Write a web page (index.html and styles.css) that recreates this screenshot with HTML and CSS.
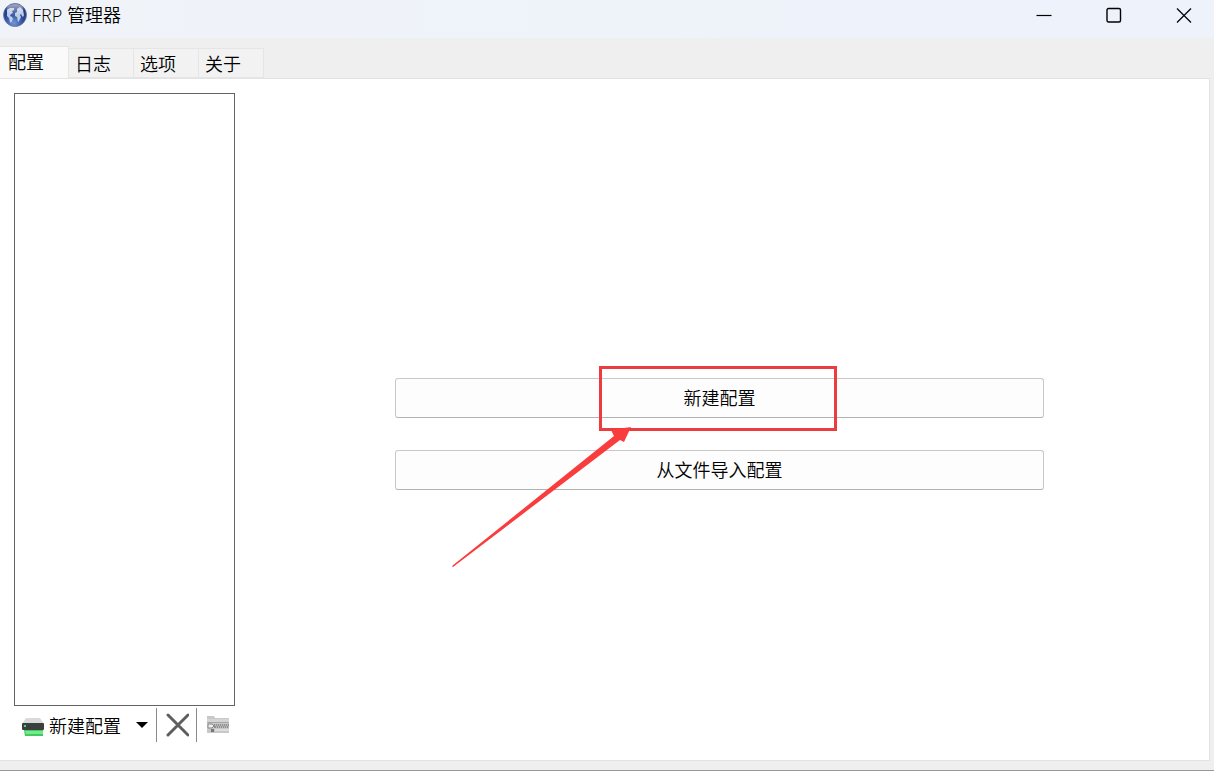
FILE: index.html
```html
<!DOCTYPE html>
<html lang="zh-CN">
<head>
<meta charset="utf-8">
<title>FRP 管理器</title>
<link rel="stylesheet" href="styles.css">
</head>
<body>
<div class="window">
  <header class="titlebar">
    <svg class="app-icon" viewBox="0 0 24 24" aria-hidden="true">
      <defs>
        <radialGradient id="globe" cx=".45" cy=".85" r=".85"><stop offset="0" stop-color="#6f98d6"/><stop offset=".5" stop-color="#2c4a98"/><stop offset="1" stop-color="#1c2c6c"/></radialGradient>
        <linearGradient id="shine" x1="0" y1="0" x2="0" y2="1"><stop offset="0" stop-color="#fff" stop-opacity=".6"/><stop offset="1" stop-color="#fff" stop-opacity=".05"/></linearGradient>
      </defs>
      <circle cx="12" cy="12" r="11.5" fill="url(#globe)" stroke="#6878a8" stroke-width=".8"/>
      <path d="M4 7l3-2 4 0 0 2-2 1 1 2-2 1-1 2 2 1 1 2-2 4-1-1-1-4-2-2zM14 6l3-2 3 3 1 5-1 2-1-1-1-2-1 1 1 2-2 4-1 1-1-5-2-1 0-3 2-1z" fill="#d0e0f4" opacity=".85"/>
      <ellipse cx="12" cy="6.500" rx="8.500" ry="5.500" fill="url(#shine)"/>
    </svg>
    <h1 class="title">FRP 管理器</h1>
    <div class="window-controls">
      <button type="button" class="control" aria-label="最小化"><svg viewBox="0 0 16 16"><path d="M0.500 8.500h15"/></svg></button>
      <button type="button" class="control" aria-label="最大化"><svg viewBox="0 0 16 16"><rect x="1" y="1.500" width="13.500" height="13.500" rx="1.500" stroke-width="1.400"/></svg></button>
      <button type="button" class="control" aria-label="关闭"><svg viewBox="0 0 16 16"><path d="M1 1.500l14 14M15 1.500l-14 14"/></svg></button>
    </div>
  </header>
  <div class="tabs" role="tablist">
    <button type="button" class="tab active" role="tab" aria-selected="true">配置</button>
    <button type="button" class="tab" role="tab" aria-selected="false">日志</button>
    <button type="button" class="tab" role="tab" aria-selected="false">选项</button>
    <button type="button" class="tab" role="tab" aria-selected="false">关于</button>
  </div>
  <main class="panel">
    <aside class="sidebar">
      <div class="list" role="listbox" aria-label="配置"></div>
      <div class="toolbar">
        <button type="button" class="tool new-tool">
          <svg class="drive-icon" viewBox="0 0 22 18" aria-hidden="true">
            <path d="M4 0h14l4 6H0z" fill="#dadada"/>
            <rect y="5" width="22" height="7" rx="1" fill="#3b3f3e"/>
            <rect x="2" y="7" width="2" height="2" fill="#43dc78"/>
            <path d="M2 12h19v6H3z" fill="#45c765"/>
            <path d="M3 13h18v3H4z" fill="#71ed88"/>
          </svg>
          <span>新建配置</span>
          <svg class="caret" viewBox="0 0 12 6" aria-hidden="true"><path d="M0 0h12L6 6z"/></svg>
        </button>
        <button type="button" class="tool delete-tool" aria-label="删除">
          <svg viewBox="0 0 24 24"><path d="M3 2l20 20M23 2L3 22" stroke="#5e5e5e" stroke-width="3" stroke-linecap="round"/></svg>
        </button>
        <button type="button" class="tool export-tool" aria-label="导出">
          <svg viewBox="0 0 24 24">
            <path d="M1 4V3h7l1 2h14v15H1z" fill="#c8c8c8"/>
            <path d="M1 6h22v3H1z" fill="#d4d4d4"/>
            <path d="M1 9.500h22" stroke="#a5a5a5"/>
            <path d="M8 11h15v4H8z" fill="#909090"/>
            <path d="M9 12h14M10 14h13" stroke="#e2e2e2" stroke-dasharray="1 1"/>
            <path d="M2 11h4l2 2-2 2H2z" fill="#eee" stroke="#888"/>
            <path d="M5 16h3v3H5z" fill="#777"/>
            <path d="M9 17h14" stroke="#ddd" stroke-width="2"/>
          </svg>
        </button>
      </div>
    </aside>
    <section class="content">
      <div class="highlighted">
        <button type="button" class="action">新建配置</button>
        <svg class="annotation" viewBox="0 0 390 206" aria-hidden="true">
          <rect x="150.500" y="4.500" width="235" height="62" fill="none" stroke="#ec3c3f" stroke-width="3"/>
          <path d="M2 203L164 73l-3-6 20-3-7 15-4-2L3 204z" fill="#f93d3d"/>
        </svg>
      </div>
      <button type="button" class="action">从文件导入配置</button>
    </section>
  </main>
</div>
</body>
</html>
```
FILE: styles.css
```css
* { box-sizing: border-box; }

body {
  margin: 0;
  background: #efefef;
  color: #000;
  font: 350 18px/24px "Noto Sans CJK SC", sans-serif;
}

button {
  font: inherit;
  color: inherit;
  border: 0;
  padding: 0;
  background: none;
}

svg { display: block; }

.window {
  display: flex;
  flex-direction: column;
  min-height: 100vh;
  padding-bottom: 9px;
  border-bottom: 1px solid #999;
}

.titlebar {
  display: flex;
  align-items: flex-start;
  height: 38px;
  padding: 3px 0 0 3px;
  background: linear-gradient(to right, #f0f4f9, #edf2fb);
}

.app-icon { width: 24px; height: 24px; }

.title {
  margin: 0 0 0 5px;
  font: 350 18px/24px "Open Sans", "Noto Sans CJK SC", sans-serif;
}

.window-controls {
  display: flex;
  margin-left: auto;
}

.control {
  display: grid;
  place-items: center;
  width: 70px;
  height: 24px;
}

.control:last-child {
  width: 60px;
  margin-left: 5px;
}

.control svg {
  width: 16px;
  height: 16px;
  fill: none;
  stroke: #000;
  stroke-width: 1.200;
}

.tabs {
  display: flex;
  align-items: flex-end;
  height: 40px;
}

.tab {
  width: 65px;
  height: 30px;
  padding: 0 0 1px 6px;
  text-align: left;
  background: #f2f2f2;
  border: 1px solid #e5e5e5;
  border-left: 0;
}

.tab.active {
  width: 69px;
  height: 32px;
  padding: 0 0 4px 8px;
  background: #fafafa;
  border-bottom: 0;
}

.panel {
  display: flex;
  flex: 1;
  gap: 9px;
  margin-right: 4px;
  padding: 14px 14px 18px;
  background: #fff;
  border: 1px solid #e3e3e3;
  border-left: 0;
}

.sidebar {
  display: flex;
  flex-direction: column;
  flex: 0 0 221px;
}

.list {
  flex: 1;
  border: 1px solid #646464;
}

.toolbar {
  display: flex;
  height: 36px;
  padding-top: 2px;
}

.tool {
  display: flex;
  align-items: center;
}

.new-tool {
  width: 143px;
  padding-left: 8px;
  border-right: 1px solid #8a8a8a;
}

.drive-icon {
  width: 22px;
  height: 18px;
  margin: 4px 5px 0 0;
}

.caret {
  width: 12px;
  height: 6px;
  margin-left: 15px;
}

.delete-tool {
  justify-content: center;
  width: 40px;
  border-right: 1px solid #8a8a8a;
}

.export-tool {
  justify-content: flex-end;
  flex: 1;
  padding-right: 5px;
}

.delete-tool svg,
.export-tool svg {
  width: 24px;
  height: 24px;
  fill: none;
}

.content {
  display: flex;
  flex-direction: column;
  justify-content: center;
  gap: 32px;
  flex: 1;
  padding: 32px 151px 0;
}

.highlighted { position: relative; }

.action {
  width: 100%;
  height: 40px;
  padding-bottom: 2px;
  background: #fdfdfd;
  border: 1px solid #c8c8c8;
  border-bottom-color: #b2b2b2;
  border-radius: 3px;
}

.annotation {
  position: absolute;
  top: -15px;
  left: calc(50% - 270px);
  width: 390px;
  height: 206px;
  pointer-events: none;
}
```
